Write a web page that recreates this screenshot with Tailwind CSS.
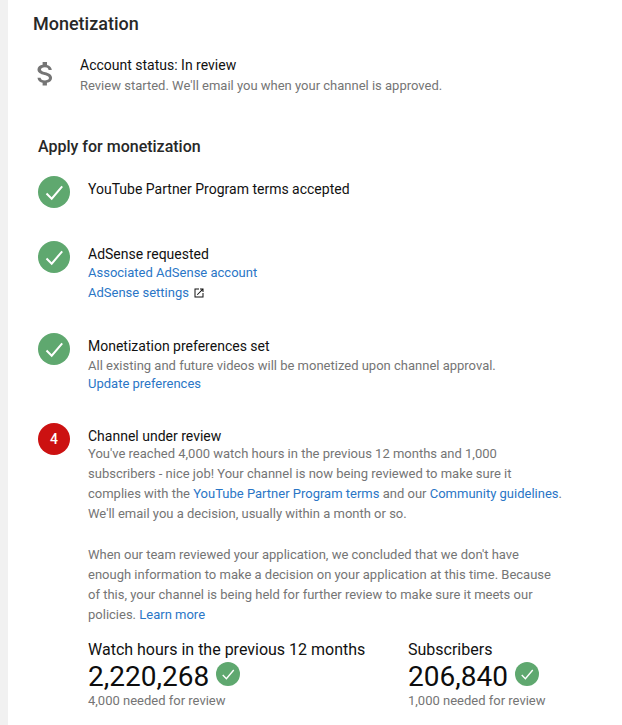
<!DOCTYPE html>
<html><head><meta charset="utf-8">
<script src="https://cdn.jsdelivr.net/npm/@tailwindcss/browser@4"></script>
</head>
<body class="bg-white">
<div class="w-[622px] h-[725px] overflow-hidden flex font-['Roboto',sans-serif]">
  <div class="w-2 shrink-0 bg-[#f1f1f1]"></div>
  <main class="w-[614px] relative">
    <h1 class="ml-[25px] pt-[12px] text-[18px] leading-[24px] font-medium text-[#282828]">Monetization</h1>
    <section class="flex mt-[19px] ml-[25px]">
      <svg class="w-[22px] h-[26px] mt-[5px] ml-[1px] shrink-0" viewBox="0 0 24 32" preserveAspectRatio="none"><path fill="#757575" d="M12.4 15.1c-3.6-.9-4.8-1.900-4.800-3.400 0-1.700 1.600-2.900 4.300-2.900 2.800 0 3.900 1.400 4 3.400h3.500c-.1-2.800-1.800-5.400-5.200-6.200V2.500H9.400v3.400C6.300 6.600 3.800 8.600 3.800 11.700c0 3.700 3.100 5.600 7.600 6.700 4.100 1 4.900 2.400 4.900 3.900 0 1.100-.8 2.900-4.300 2.900-3.300 0-4.600-1.500-4.800-3.400H3.800c.2 3.600 2.900 5.600 5.600 6.200V31.500h4.700v-3.400c3.100-.6 5.600-2.400 5.600-5.800 0-4.600-4-6.200-7.300-7.200z"/></svg>
      <div class="ml-[24px]">
        <p class="text-[14px] leading-[21px] text-[#111]">Account status: In review</p>
        <p class="text-[13px] leading-[20px] text-[#757575]">Review started. We'll email you when your channel is approved.</p>
      </div>
    </section>
    <h2 class="ml-[30px] mt-[40px] text-[16px] leading-[22px] font-medium text-[#282828]">Apply for monetization</h2>

    <section class="flex ml-[30px] mt-[18px] gap-[18px]">
      <span class="w-[32px] h-[32px] rounded-full bg-[#5fa86f] flex items-center justify-center shrink-0">
        <svg class="w-[20px] h-[20px]" viewBox="0 0 20 20"><path d="M2.500 11.500l5.200 5.200L18.200 4.300" fill="none" stroke="#fff" stroke-width="2"/></svg>
      </span>
      <p class="text-[14px] leading-[20px] text-[#111] mt-[3px]">YouTube Partner Program terms accepted</p>
    </section>

    <section class="flex ml-[30px] mt-[33px] gap-[18px]">
      <span class="w-[32px] h-[32px] rounded-full bg-[#5fa86f] flex items-center justify-center shrink-0">
        <svg class="w-[20px] h-[20px]" viewBox="0 0 20 20"><path d="M2.500 11.500l5.200 5.200L18.200 4.300" fill="none" stroke="#fff" stroke-width="2"/></svg>
      </span>
      <div class="mt-[3px]">
        <p class="text-[14px] leading-[20px] text-[#111]">AdSense requested</p>
        <p class="text-[13px] leading-[18px] text-[#2a76c6]">Associated AdSense account</p>
        <p class="text-[13px] leading-[20px] mt-[1px] text-[#2a76c6] flex items-center">AdSense settings
          <svg class="w-[12px] h-[12px] ml-[4px]" viewBox="0 0 24 24"><path fill="#111" d="M19 19H5V5h7V3H3v18h18v-9h-2v7zM14 3v2h3.590l-9.830 9.830 1.410 1.410L19 6.410V10h2V3h-7z"/></svg>
        </p>
      </div>
    </section>

    <section class="flex ml-[30px] mt-[30px] gap-[18px]">
      <span class="w-[32px] h-[32px] rounded-full bg-[#5fa86f] flex items-center justify-center shrink-0">
        <svg class="w-[20px] h-[20px]" viewBox="0 0 20 20"><path d="M2.500 11.500l5.200 5.200L18.200 4.300" fill="none" stroke="#fff" stroke-width="2"/></svg>
      </span>
      <div class="mt-[3px]">
        <p class="text-[14px] leading-[21px] text-[#111]">Monetization preferences set</p>
        <p class="text-[13px] leading-[18px] text-[#757575]">All existing and future videos will be monetized upon channel approval.</p>
        <p class="text-[13px] leading-[18px] text-[#2a76c6]">Update preferences</p>
      </div>
    </section>

    <section class="flex ml-[30px] mt-[30px] gap-[18px]">
      <span class="w-[32px] h-[32px] rounded-full bg-[#cc1111] text-white text-[14px] font-medium flex items-center justify-center shrink-0">4</span>
      <div class="mt-[3px]">
        <p class="text-[14px] leading-[20px] text-[#111]">Channel under review</p>
        <p class="text-[13px] leading-[20px] text-[#757575] w-[480px] -mt-[2px]">You've reached 4,000 watch hours in the previous 12 months and 1,000<br>subscribers - nice job! Your channel is now being reviewed to make sure it<br>complies with the <span class="text-[#2a76c6]">YouTube Partner Program terms</span> and our <span class="text-[#2a76c6]">Community guidelines</span>.<br>We'll email you a decision, usually within a month or so.</p>
        <p class="text-[13px] leading-[20px] text-[#757575] w-[480px] mt-[21px]">When our team reviewed your application, we concluded that we don't have<br>enough information to make a decision on your application at this time. Because<br>of this, your channel is being held for further review to make sure it meets our<br>policies. <span class="text-[#2a76c6]">Learn more</span></p>
        <div class="flex mt-[15px]">
          <div class="w-[320px]">
            <p class="text-[16px] leading-[20px] text-[#111]">Watch hours in the previous 12 months</p>
            <div class="flex items-center gap-[7px]"><span class="text-[28px] leading-[34px] text-[#0d0d0d]">2,220,268</span>
              <span class="w-[24px] h-[24px] rounded-full bg-[#5fa86f] flex items-center justify-center -mt-[7px]"><svg class="w-[14px] h-[14px]" viewBox="0 0 20 20"><path d="M2.500 11.500l5.200 5.200L18.200 4.300" fill="none" stroke="#fff" stroke-width="2"/></svg></span>
            </div>
            <p class="text-[13px] leading-[18px] -mt-[2px] text-[#757575]">4,000 needed for review</p>
          </div>
          <div>
            <p class="text-[16px] leading-[20px] text-[#111]">Subscribers</p>
            <div class="flex items-center gap-[7px]"><span class="text-[28px] leading-[34px] text-[#0d0d0d]">206,840</span>
              <span class="w-[24px] h-[24px] rounded-full bg-[#5fa86f] flex items-center justify-center -mt-[7px]"><svg class="w-[14px] h-[14px]" viewBox="0 0 20 20"><path d="M2.500 11.500l5.200 5.200L18.200 4.300" fill="none" stroke="#fff" stroke-width="2"/></svg></span>
            </div>
            <p class="text-[13px] leading-[18px] -mt-[2px] text-[#757575]">1,000 needed for review</p>
          </div>
        </div>
      </div>
    </section>
  </main>
</div>
</body></html>
